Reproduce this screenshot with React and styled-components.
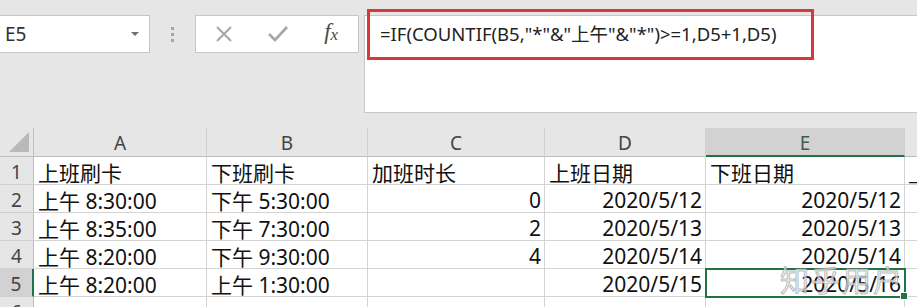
import React from 'react';
import styled, { createGlobalStyle, css } from 'styled-components';

const GREEN = '#217346';

const columns = [
  { key: 'A', width: 173 },
  { key: 'B', width: 161 },
  { key: 'C', width: 177 },
  { key: 'D', width: 161 },
  { key: 'E', width: 199 },
  { key: 'F', width: null },
];

const rows = [
  ['上班刷卡', '下班刷卡', '加班时长', '上班日期', '下班日期', '_'],
  ['上午 8:30:00', '下午 5:30:00', '0', '2020/5/12', '2020/5/12', ''],
  ['上午 8:35:00', '下午 7:30:00', '2', '2020/5/13', '2020/5/13', ''],
  ['上午 8:20:00', '下午 9:30:00', '4', '2020/5/14', '2020/5/14', ''],
  ['上午 8:20:00', '上午 1:30:00', '', '2020/5/15', '2020/5/16', ''],
  ['', '', '', '', '', ''],
];

const selected = { row: 5, col: 'E' };

const isNumeric = v => /^[\d/]+$/.test(v);

function App() {
  return (
    <>
      <GlobalStyle />
      <Page>
        <FormulaRow>
          <NameBox>
            <span>E5</span>
            <Caret />
          </NameBox>
          <Grip>
            <i />
            <i />
            <i />
          </Grip>
          <FuncBox>
            <IconSlot>
              <svg width="20" height="20" viewBox="0 0 20 20">
                <path d="M3 3 L17 17 M17 3 L3 17" stroke="#a6a6a6" strokeWidth="2" fill="none" />
              </svg>
            </IconSlot>
            <IconSlot>
              <svg width="22" height="20" viewBox="0 0 22 20">
                <path d="M2 10 L8 16 L20 3" stroke="#a6a6a6" strokeWidth="2.6" fill="none" />
              </svg>
            </IconSlot>
            <IconSlot>
              <Fx>
                f<sub>x</sub>
              </Fx>
            </IconSlot>
          </FuncBox>
          <FormulaInput>
            <Highlight />
            =IF(COUNTIF(B5,"*"&"上午"&"*")&gt;=1,D5+1,D5)
          </FormulaInput>
        </FormulaRow>

        <Sheet>
          <Corner>
            <svg width="22" height="21" viewBox="0 0 22 21">
              <polygon points="21,0 21,20 1,20" fill="#b9b9b9" />
            </svg>
          </Corner>
          {columns.map(c => (
            <ColHeader key={c.key} $active={c.key === selected.col}>
              {c.key === 'F' ? '' : c.key}
            </ColHeader>
          ))}
          {rows.map((r, i) => (
            <React.Fragment key={i}>
              <RowHeader $active={i + 1 === selected.row}>{i + 1}</RowHeader>
              {r.map((v, j) => {
                const sel = i + 1 === selected.row && columns[j].key === selected.col;
                return (
                  <Cell key={j} $right={i > 0 && isNumeric(v)} $selected={sel}>
                    {v}
                    {sel && <FillHandle />}
                  </Cell>
                );
              })}
            </React.Fragment>
          ))}
          <Watermark>知乎用户</Watermark>
        </Sheet>
      </Page>
    </>
  );
}

const GlobalStyle = createGlobalStyle`
  body {
    margin: 0;
    background: #e6e6e6;
    font-family: "Noto Sans", "Noto Sans CJK SC", sans-serif;
    overflow: hidden;
  }
`;

const Page = styled.div`
  width: 917px;
  height: 307px;
  overflow: hidden;
  background: #e6e6e6;
`;

const FormulaRow = styled.div`
  display: flex;
  align-items: flex-start;
  box-sizing: border-box;
  height: 128px;
  padding-top: 15px;
`;

const NameBox = styled.div`
  box-sizing: border-box;
  width: 150px;
  height: 38px;
  display: flex;
  align-items: center;
  justify-content: space-between;
  padding: 0 10px 0 5px;
  background: #fff;
  border: 1px solid #c6c6c6;
  border-left: none;
  font-size: 19px;
  color: #333;
`;

const Caret = styled.span`
  width: 0;
  height: 0;
  border-left: 4px solid transparent;
  border-right: 4px solid transparent;
  border-top: 4px solid #707070;
`;

const Grip = styled.div`
  width: 45px;
  height: 38px;
  display: flex;
  flex-direction: column;
  align-items: center;
  justify-content: center;
  gap: 3px;

  i {
    width: 3px;
    height: 3px;
    background: #a6a6a6;
  }
`;

const FuncBox = styled.div`
  box-sizing: border-box;
  width: 164px;
  height: 38px;
  display: flex;
  align-items: center;
  padding-left: 1px;
  background: #fff;
  border: 1px solid #c6c6c6;
`;

const IconSlot = styled.div`
  width: 54px;
  display: flex;
  align-items: center;
  justify-content: center;
`;

const Fx = styled.span`
  font-family: "Liberation Serif", serif;
  font-style: italic;
  font-size: 23px;
  color: #4a4a4a;
  margin-top: -4px;

  sub {
    font-size: 17px;
    vertical-align: -1px;
  }
`;

const FormulaInput = styled.div`
  position: relative;
  box-sizing: border-box;
  flex: 1;
  height: 98px;
  margin-left: 5px;
  padding: 7px 0 0 15px;
  background: #fff;
  border: 1px solid #c6c6c6;
  border-right: none;
  font-size: 18.5px;
  line-height: 22px;
  color: #222;
  white-space: nowrap;
`;

const Highlight = styled.div`
  position: absolute;
  left: 2px;
  top: -7px;
  width: 447px;
  height: 51px;
  box-sizing: border-box;
  border: 3px solid #d9383a;
  pointer-events: none;
`;

const Sheet = styled.div`
  position: relative;
  display: grid;
  grid-template-columns: 34px ${columns.filter(c => c.width).map(c => `${c.width}px`).join(' ')} 1fr;
  grid-template-rows: 29px;
  grid-auto-rows: 28px;
`;

const headerBase = css`
  box-sizing: border-box;
  display: flex;
  align-items: center;
  justify-content: center;
  background: #e6e6e6;
  font-size: 19px;
  color: #444;
`;

const Corner = styled.div`
  ${headerBase};
  align-items: flex-end;
  justify-content: flex-end;
  padding: 0 3px 3px 0;
  border-right: 1px solid #c0c0c0;
  border-bottom: 1px solid #c0c0c0;
`;

const ColHeader = styled.div`
  ${headerBase};
  padding-top: 2px;
  border-right: 1px solid #d0d0d0;
  border-bottom: 1px solid #bdbdbd;
  ${({ $active }) =>
    $active &&
    css`
      background: #d2d2d2;
      color: #3d5c4a;
      border-bottom: 2px solid ${GREEN};
      padding-top: 3px;
    `}
`;

const RowHeader = styled.div`
  ${headerBase};
  padding-top: 2px;
  border-right: 1px solid #bdbdbd;
  border-bottom: 1px solid #d0d0d0;
  ${({ $active }) =>
    $active &&
    css`
      background: #d2d2d2;
      border-right: 2px solid ${GREEN};
    `}
`;

const Cell = styled.div`
  position: relative;
  box-sizing: border-box;
  display: flex;
  align-items: center;
  justify-content: ${({ $right }) => ($right ? 'flex-end' : 'flex-start')};
  padding: 3px 3px 0 4px;
  background: #fff;
  border-right: 1px solid #d4d4d4;
  border-bottom: 1px solid #d4d4d4;
  font-size: 21px;
  color: #111;
  white-space: nowrap;
  overflow: visible;
  ${({ $selected }) =>
    $selected &&
    css`
      outline: 2px solid ${GREEN};
      outline-offset: -1px;
      z-index: 1;
    `}
`;

const FillHandle = styled.span`
  position: absolute;
  right: -4px;
  bottom: -4px;
  width: 6px;
  height: 6px;
  background: ${GREEN};
  border: 1px solid #fff;
`;

const Watermark = styled.div`
  position: absolute;
  left: 780px;
  top: 130px;
  z-index: 2;
  font-size: 29px;
  letter-spacing: 2px;
  color: rgba(235, 235, 235, 0.75);
  -webkit-text-stroke: 1px rgba(150, 150, 150, 0.6);
  pointer-events: none;
`;

export default App;
